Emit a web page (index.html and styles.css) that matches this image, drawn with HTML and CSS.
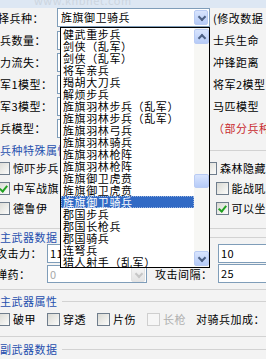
FILE: index.html
```html
<!DOCTYPE html>
<html lang="zh-CN">

<head>
    <meta charset="UTF-8">
    <title>兵种修改</title>
    <link rel="stylesheet" href="styles.css">
</head>

<body>
    <div class="screen">
        <div class="topbar"><span class="mark">www.knbnet.com</span></div>

        <div class="row row-top">
            <span class="lbl cut">择兵种：</span>
            <div class="combo main-combo">
                <span class="combo-text">旌旗御卫骑兵</span>
                <span class="arrow"></span>
            </div>
            <span class="side">(修改数据</span>
        </div>

        <div class="row">
            <span class="lbl">兵数量：</span>
            <span class="field"></span>
            <span class="side">士兵生命</span>
        </div>
        <div class="row">
            <span class="lbl">力流失：</span>
            <span class="field"></span>
            <span class="side">冲锋距离</span>
        </div>
        <div class="row">
            <span class="lbl">军1模型：</span>
            <span class="field"></span>
            <span class="side">将军2模型</span>
        </div>
        <div class="row">
            <span class="lbl">军3模型：</span>
            <span class="field"></span>
            <span class="side">马匹模型</span>
        </div>
        <div class="row">
            <span class="lbl">兵模型：</span>
            <span class="field"></span>
            <span class="side warn">（部分兵种</span>
        </div>

        <!-- 兵种特殊属性 -->
        <div class="gtitle first">兵种特殊属性</div>
        <div class="chkrow">
            <label class="chk left"><span class="box"></span>惊吓步兵</label>
            <label class="chk"><span class="box"></span>森林隐藏</label>
        </div>
        <div class="chkrow">
            <label class="chk left"><span class="box on"></span>中军战旗</label>
            <label class="chk"><span class="box"></span>能战吼</label>
        </div>
        <div class="chkrow">
            <label class="chk left"><span class="box"></span>德鲁伊</label>
            <label class="chk"><span class="box on"></span>可以坐</label>
        </div>
        <div class="gline g1"></div>

        <!-- 主武器数据 -->
        <div class="gtitle">主武器数据</div>
        <div class="row row-weapon">
            <span class="lbl2">攻击力：</span>
            <span class="field f-atk">11</span>
            <span class="field f-right">10</span>
        </div>
        <div class="row row-weapon">
            <span class="lbl2">弹药：</span>
            <div class="combo ammo">
                <span class="combo-text dim">0</span>
                <span class="arrow off"></span>
            </div>
            <span class="mid-lbl">攻击间隔：</span>
            <span class="field f-right">25</span>
        </div>
        <div class="gline g2"></div>

        <!-- 主武器属性 -->
        <div class="gtitle">主武器属性</div>
        <div class="chkrow attr">
            <label class="chk c1"><span class="box"></span>破甲</label>
            <label class="chk c2"><span class="box"></span>穿透</label>
            <label class="chk c2"><span class="box"></span>片伤</label>
            <label class="chk c2 disabled"><span class="box"></span>长枪</label>
            <span class="bonus">对骑兵加成：</span>
        </div>
        <div class="gline g3"></div>

        <div class="gtitle">副武器数据</div>

        <!-- open dropdown of the first combo -->
        <div class="droplist">
            <ul>
                <li>健武重步兵</li>
                <li>剑侠（乱军）</li>
                <li>剑侠（乱军）</li>
                <li>将军亲兵</li>
                <li>羯胡大刀兵</li>
                <li>解烦步兵</li>
                <li>旌旗羽林步兵（乱军）</li>
                <li>旌旗羽林步兵（乱军）</li>
                <li>旌旗羽林弓兵</li>
                <li>旌旗羽林骑兵</li>
                <li>旌旗羽林枪阵</li>
                <li>旌旗羽林枪阵</li>
                <li>旌旗御卫虎贲</li>
                <li>旌旗御卫虎贲</li>
                <li class="sel">旌旗御卫骑兵</li>
                <li>郡国步兵</li>
                <li>郡国长枪兵</li>
                <li>郡国骑兵</li>
                <li>连弩兵</li>
                <li>猎人射手（乱军）</li>
            </ul>
            <div class="scroll">
                <span class="sbtn up"></span>
                <span class="thumb"></span>
                <span class="sbtn down"></span>
            </div>
        </div>
    </div>
</body>

</html>
```

FILE: styles.css
```css
* {
    box-sizing: border-box;
}

body {
    margin: 0;
    background-color: #f3f3f3;
    font-family: "Noto Sans CJK SC", "Noto Sans", sans-serif;
    font-size: 11px;
    letter-spacing: 0.5px;
    color: #000;
}

.screen {
    position: relative;
    width: 266px;
    height: 359px;
    overflow: hidden;
}

.topbar {
    height: 8px;
    background-color: #dde7f3;
    overflow: hidden;
}

.mark {
    display: block;
    margin: -6px 0 0 34px;
    font-size: 11px;
    line-height: 12px;
    color: #ccd5df;
}

/* form rows */
.row {
    display: flex;
    align-items: center;
    height: 22px;
    white-space: nowrap;
}

.row-top {
    height: 19px;
    margin-bottom: 2px;
}

.lbl {
    width: 57px;
    flex: none;
}

.lbl.cut {
    margin-left: -2px;
    width: 59px;
}

.field {
    flex: none;
    width: 150px;
    height: 19px;
    border: 1px solid #7f9db9;
    background-color: #fff;
    padding-left: 2px;
    line-height: 17px;
    margin-right: 6px;
}

.side {
    white-space: nowrap;
}

.warn {
    color: #c8282d;
}

/* combo boxes */
.combo {
    position: relative;
    flex: none;
    height: 19px;
    border: 1px solid #7f9db9;
    background-color: #fff;
}

.main-combo {
    width: 153px;
    margin-right: 3px;
}

.combo-text {
    display: block;
    padding-left: 3px;
    line-height: 17px;
}

.combo-text.dim {
    color: #a8a8a8;
    padding-left: 2px;
}

.arrow {
    position: absolute;
    top: 1px;
    right: 1px;
    width: 14px;
    height: 15px;
    border: 1px solid #b9cbf3;
    border-radius: 2px;
    background: linear-gradient(#d8e4fd, #b6cbf7);
}

.arrow::after {
    content: "";
    position: absolute;
    left: 4px;
    top: 3px;
    width: 4px;
    height: 4px;
    border-right: 2px solid #4d6185;
    border-bottom: 2px solid #4d6185;
    transform: rotate(45deg);
}

.arrow.off {
    border-color: #e2e2e2;
    background: linear-gradient(#f4f4f4, #e4e4e4);
}

.arrow.off::after {
    border-color: #c6c6c6;
}

/* group boxes */
.gtitle {
    display: flex;
    align-items: center;
    height: 12px;
    line-height: 12px;
    color: #1f4fae;
    white-space: nowrap;
}

.gtitle::after {
    content: "";
    flex: 1;
    border-top: 1px solid #d2d2d2;
    margin-left: 4px;
}

.gtitle.first {
    margin-top: 5px;
    margin-bottom: 2px;
}

.gline {
    height: 1px;
    background-color: #d2d2d2;
}

.g1 {
    margin-top: 10px;
    margin-bottom: 2px;
}

.g2 {
    margin-top: 5px;
    margin-bottom: 5px;
}

.g3 {
    margin-top: 10px;
    margin-bottom: 6px;
}

/* checkboxes */
.chkrow {
    display: flex;
    align-items: center;
    height: 20px;
    white-space: nowrap;
}

.chk {
    display: flex;
    align-items: center;
    gap: 3px;
}

.chk.left {
    width: 222px;
    margin-left: -3px;
}

.box {
    position: relative;
    flex: none;
    width: 13px;
    height: 13px;
    border: 1px solid #6f7d8c;
    background: linear-gradient(135deg, #d9d9d3, #fcfcfb);
}

.box.on::after {
    content: "";
    position: absolute;
    left: 3px;
    top: 1px;
    width: 3px;
    height: 6px;
    border-right: 2px solid #21a121;
    border-bottom: 2px solid #21a121;
    transform: rotate(40deg);
}

.attr {
    height: 14px;
    margin-top: 5px;
}

.c1 {
    margin-left: -3px;
    width: 50px;
}

.c2 {
    width: 50px;
}

.disabled {
    color: #b0b0b0;
}

.disabled .box {
    border-color: #cfcfcf;
    background: #f6f6f6;
}

.bonus {
    margin-left: -1px;
}

/* weapon rows */
.row-weapon {
    height: 20px;
}

.row-weapon + .row-weapon {
    height: 21px;
}

.lbl2 {
    flex: none;
    width: 51px;
    margin-left: -4px;
}

.f-atk {
    width: 103px;
    margin-right: 68px;
}

.f-right {
    width: 60px;
    margin-right: 0;
}

.ammo {
    width: 100px;
    height: 18px;
    margin-right: 8px;
}

.mid-lbl {
    width: 63px;
    flex: none;
}

/* dropdown list overlay */
.droplist {
    position: absolute;
    left: 60px;
    top: 27px;
    width: 150px;
    height: 241px;
    border: 1px solid #000;
    background-color: #fff;
    overflow: hidden;
}

.droplist ul {
    list-style: none;
    margin: 0;
    padding: 0;
}

.droplist li {
    height: 12px;
    line-height: 12px;
    padding-left: 2px;
    letter-spacing: 0.6px;
    white-space: nowrap;
}

.droplist li.sel {
    margin-right: 15px;
    background-color: #316ac5;
    color: #fff;
    outline: 1px dotted #9bb4de;
    outline-offset: -1px;
}

.scroll {
    position: absolute;
    top: 0;
    right: 0;
    width: 15px;
    height: 100%;
    background-color: #f7f7f4;
}

.sbtn,
.thumb {
    position: absolute;
    left: 0;
    width: 15px;
    border: 1px solid #b9cbf3;
    border-radius: 2px;
    background: linear-gradient(#d8e4fd, #b6cbf7);
}

.sbtn {
    height: 15px;
}

.sbtn.up {
    top: 1px;
}

.sbtn.down {
    bottom: 1px;
}

.sbtn::after {
    content: "";
    position: absolute;
    left: 4px;
    width: 4px;
    height: 4px;
    border-right: 2px solid #4d6185;
    border-bottom: 2px solid #4d6185;
}

.sbtn.up::after {
    top: 5px;
    transform: rotate(-135deg);
}

.sbtn.down::after {
    top: 3px;
    transform: rotate(45deg);
}

.thumb {
    top: 146px;
    height: 14px;
}
```
